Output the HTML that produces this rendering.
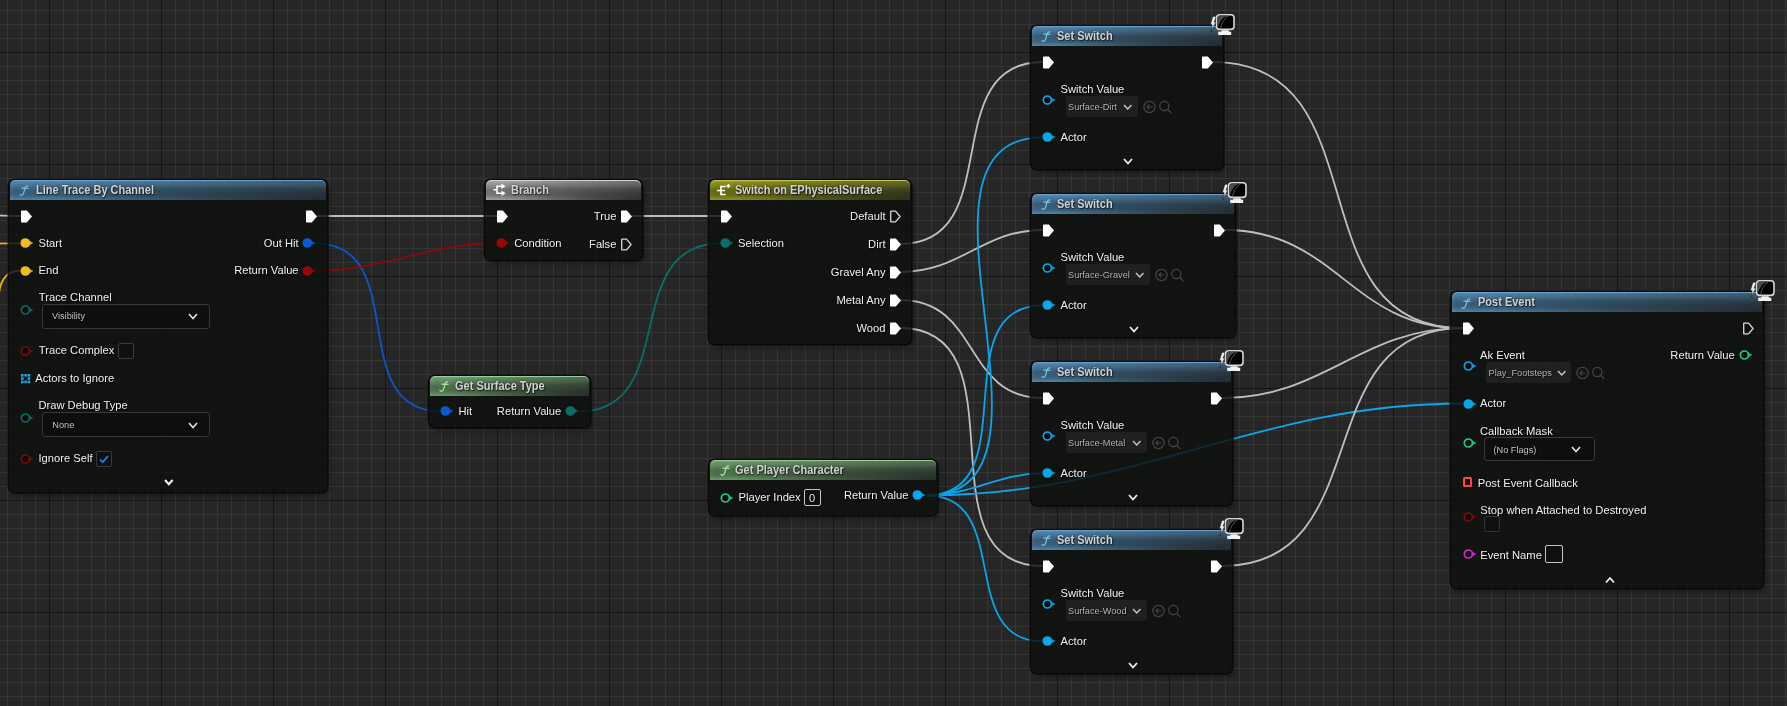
<!DOCTYPE html><html><head><meta charset="utf-8"><style>html,body{margin:0;padding:0}body{width:1787px;height:706px;overflow:hidden;background:#262626;position:relative;font-family:"Liberation Sans",sans-serif}.abs{position:absolute;overflow:visible}.t{position:absolute;white-space:nowrap;line-height:1}.n{position:absolute;background:rgba(14,16,14,0.82);border-radius:6px;box-shadow:0 0 0 1.5px rgba(8,8,8,0.9),2px 3px 5px rgba(0,0,0,0.45)}.hd{position:absolute;border-radius:5px 5px 0 0;background-image:linear-gradient(to bottom,rgba(255,255,255,.08) 0px,rgba(255,255,255,0) 2px),linear-gradient(to right,rgba(40,40,40,0) 0%,rgba(40,40,40,0) 12%,rgba(40,40,40,.18) 45%,rgba(40,40,40,.45) 100%),linear-gradient(to bottom,rgba(0,0,0,0) 1px,rgba(0,0,0,.1) 4px,rgba(0,0,0,.32) 10px,rgba(0,0,0,.3) 15px,rgba(0,0,0,.1) 19px,rgba(0,0,0,.04) 20px),linear-gradient(to right,rgba(255,255,255,.08) 0px,rgba(255,255,255,0) 5px)}.fi{font-family:"Liberation Serif",serif;font-style:italic;font-size:15px}.dd{position:absolute;background:#0e0e0e;border:1px solid #383838;border-radius:3px}.dd2{position:absolute;background:rgba(44,44,44,0.55);border-radius:3px}.cb{position:absolute;background:#101010;border:1px solid #3a3a3a;border-radius:2px}.hd2{position:absolute;border-radius:0 5px 0 0;background:linear-gradient(to bottom,rgba(22,24,26,0) 25%,rgba(22,24,26,.72) 100%);-webkit-mask-image:linear-gradient(to right,transparent 12%,#000 100%);mask-image:linear-gradient(to right,transparent 12%,#000 100%)}#root{position:absolute;left:0;top:0;width:1787px;height:706px;will-change:transform}</style></head><body><div id="root">
<svg class="abs" width="1787" height="706" style="left:0;top:0"><rect x="7" y="0" width="1" height="706" fill="#353535"/><rect x="21" y="0" width="1" height="706" fill="#353535"/><rect x="35" y="0" width="1" height="706" fill="#353535"/><rect x="63" y="0" width="1" height="706" fill="#353535"/><rect x="77" y="0" width="1" height="706" fill="#353535"/><rect x="91" y="0" width="1" height="706" fill="#353535"/><rect x="105" y="0" width="1" height="706" fill="#353535"/><rect x="119" y="0" width="1" height="706" fill="#353535"/><rect x="133" y="0" width="1" height="706" fill="#353535"/><rect x="147" y="0" width="1" height="706" fill="#353535"/><rect x="175" y="0" width="1" height="706" fill="#353535"/><rect x="189" y="0" width="1" height="706" fill="#353535"/><rect x="203" y="0" width="1" height="706" fill="#353535"/><rect x="217" y="0" width="1" height="706" fill="#353535"/><rect x="231" y="0" width="1" height="706" fill="#353535"/><rect x="245" y="0" width="1" height="706" fill="#353535"/><rect x="259" y="0" width="1" height="706" fill="#353535"/><rect x="287" y="0" width="1" height="706" fill="#353535"/><rect x="301" y="0" width="1" height="706" fill="#353535"/><rect x="315" y="0" width="1" height="706" fill="#353535"/><rect x="329" y="0" width="1" height="706" fill="#353535"/><rect x="343" y="0" width="1" height="706" fill="#353535"/><rect x="357" y="0" width="1" height="706" fill="#353535"/><rect x="371" y="0" width="1" height="706" fill="#353535"/><rect x="399" y="0" width="1" height="706" fill="#353535"/><rect x="413" y="0" width="1" height="706" fill="#353535"/><rect x="427" y="0" width="1" height="706" fill="#353535"/><rect x="441" y="0" width="1" height="706" fill="#353535"/><rect x="455" y="0" width="1" height="706" fill="#353535"/><rect x="469" y="0" width="1" height="706" fill="#353535"/><rect x="483" y="0" width="1" height="706" fill="#353535"/><rect x="511" y="0" width="1" height="706" fill="#353535"/><rect x="525" y="0" width="1" height="706" fill="#353535"/><rect x="539" y="0" width="1" height="706" fill="#353535"/><rect x="553" y="0" width="1" height="706" fill="#353535"/><rect x="567" y="0" width="1" height="706" fill="#353535"/><rect x="581" y="0" width="1" height="706" fill="#353535"/><rect x="595" y="0" width="1" height="706" fill="#353535"/><rect x="623" y="0" width="1" height="706" fill="#353535"/><rect x="637" y="0" width="1" height="706" fill="#353535"/><rect x="651" y="0" width="1" height="706" fill="#353535"/><rect x="665" y="0" width="1" height="706" fill="#353535"/><rect x="679" y="0" width="1" height="706" fill="#353535"/><rect x="693" y="0" width="1" height="706" fill="#353535"/><rect x="707" y="0" width="1" height="706" fill="#353535"/><rect x="735" y="0" width="1" height="706" fill="#353535"/><rect x="749" y="0" width="1" height="706" fill="#353535"/><rect x="763" y="0" width="1" height="706" fill="#353535"/><rect x="777" y="0" width="1" height="706" fill="#353535"/><rect x="791" y="0" width="1" height="706" fill="#353535"/><rect x="805" y="0" width="1" height="706" fill="#353535"/><rect x="819" y="0" width="1" height="706" fill="#353535"/><rect x="847" y="0" width="1" height="706" fill="#353535"/><rect x="861" y="0" width="1" height="706" fill="#353535"/><rect x="875" y="0" width="1" height="706" fill="#353535"/><rect x="889" y="0" width="1" height="706" fill="#353535"/><rect x="903" y="0" width="1" height="706" fill="#353535"/><rect x="917" y="0" width="1" height="706" fill="#353535"/><rect x="931" y="0" width="1" height="706" fill="#353535"/><rect x="959" y="0" width="1" height="706" fill="#353535"/><rect x="973" y="0" width="1" height="706" fill="#353535"/><rect x="987" y="0" width="1" height="706" fill="#353535"/><rect x="1001" y="0" width="1" height="706" fill="#353535"/><rect x="1015" y="0" width="1" height="706" fill="#353535"/><rect x="1029" y="0" width="1" height="706" fill="#353535"/><rect x="1043" y="0" width="1" height="706" fill="#353535"/><rect x="1071" y="0" width="1" height="706" fill="#353535"/><rect x="1085" y="0" width="1" height="706" fill="#353535"/><rect x="1099" y="0" width="1" height="706" fill="#353535"/><rect x="1113" y="0" width="1" height="706" fill="#353535"/><rect x="1127" y="0" width="1" height="706" fill="#353535"/><rect x="1141" y="0" width="1" height="706" fill="#353535"/><rect x="1155" y="0" width="1" height="706" fill="#353535"/><rect x="1183" y="0" width="1" height="706" fill="#353535"/><rect x="1197" y="0" width="1" height="706" fill="#353535"/><rect x="1211" y="0" width="1" height="706" fill="#353535"/><rect x="1225" y="0" width="1" height="706" fill="#353535"/><rect x="1239" y="0" width="1" height="706" fill="#353535"/><rect x="1253" y="0" width="1" height="706" fill="#353535"/><rect x="1267" y="0" width="1" height="706" fill="#353535"/><rect x="1295" y="0" width="1" height="706" fill="#353535"/><rect x="1309" y="0" width="1" height="706" fill="#353535"/><rect x="1323" y="0" width="1" height="706" fill="#353535"/><rect x="1337" y="0" width="1" height="706" fill="#353535"/><rect x="1351" y="0" width="1" height="706" fill="#353535"/><rect x="1365" y="0" width="1" height="706" fill="#353535"/><rect x="1379" y="0" width="1" height="706" fill="#353535"/><rect x="1407" y="0" width="1" height="706" fill="#353535"/><rect x="1421" y="0" width="1" height="706" fill="#353535"/><rect x="1435" y="0" width="1" height="706" fill="#353535"/><rect x="1449" y="0" width="1" height="706" fill="#353535"/><rect x="1463" y="0" width="1" height="706" fill="#353535"/><rect x="1477" y="0" width="1" height="706" fill="#353535"/><rect x="1491" y="0" width="1" height="706" fill="#353535"/><rect x="1519" y="0" width="1" height="706" fill="#353535"/><rect x="1533" y="0" width="1" height="706" fill="#353535"/><rect x="1547" y="0" width="1" height="706" fill="#353535"/><rect x="1561" y="0" width="1" height="706" fill="#353535"/><rect x="1575" y="0" width="1" height="706" fill="#353535"/><rect x="1589" y="0" width="1" height="706" fill="#353535"/><rect x="1603" y="0" width="1" height="706" fill="#353535"/><rect x="1631" y="0" width="1" height="706" fill="#353535"/><rect x="1645" y="0" width="1" height="706" fill="#353535"/><rect x="1659" y="0" width="1" height="706" fill="#353535"/><rect x="1673" y="0" width="1" height="706" fill="#353535"/><rect x="1687" y="0" width="1" height="706" fill="#353535"/><rect x="1701" y="0" width="1" height="706" fill="#353535"/><rect x="1715" y="0" width="1" height="706" fill="#353535"/><rect x="1743" y="0" width="1" height="706" fill="#353535"/><rect x="1757" y="0" width="1" height="706" fill="#353535"/><rect x="1771" y="0" width="1" height="706" fill="#353535"/><rect x="1785" y="0" width="1" height="706" fill="#353535"/><rect x="0" y="10" width="1787" height="1" fill="#353535"/><rect x="0" y="24" width="1787" height="1" fill="#353535"/><rect x="0" y="38" width="1787" height="1" fill="#353535"/><rect x="0" y="66" width="1787" height="1" fill="#353535"/><rect x="0" y="80" width="1787" height="1" fill="#353535"/><rect x="0" y="94" width="1787" height="1" fill="#353535"/><rect x="0" y="108" width="1787" height="1" fill="#353535"/><rect x="0" y="122" width="1787" height="1" fill="#353535"/><rect x="0" y="136" width="1787" height="1" fill="#353535"/><rect x="0" y="150" width="1787" height="1" fill="#353535"/><rect x="0" y="178" width="1787" height="1" fill="#353535"/><rect x="0" y="192" width="1787" height="1" fill="#353535"/><rect x="0" y="206" width="1787" height="1" fill="#353535"/><rect x="0" y="220" width="1787" height="1" fill="#353535"/><rect x="0" y="234" width="1787" height="1" fill="#353535"/><rect x="0" y="248" width="1787" height="1" fill="#353535"/><rect x="0" y="262" width="1787" height="1" fill="#353535"/><rect x="0" y="290" width="1787" height="1" fill="#353535"/><rect x="0" y="304" width="1787" height="1" fill="#353535"/><rect x="0" y="318" width="1787" height="1" fill="#353535"/><rect x="0" y="332" width="1787" height="1" fill="#353535"/><rect x="0" y="346" width="1787" height="1" fill="#353535"/><rect x="0" y="360" width="1787" height="1" fill="#353535"/><rect x="0" y="374" width="1787" height="1" fill="#353535"/><rect x="0" y="402" width="1787" height="1" fill="#353535"/><rect x="0" y="416" width="1787" height="1" fill="#353535"/><rect x="0" y="430" width="1787" height="1" fill="#353535"/><rect x="0" y="444" width="1787" height="1" fill="#353535"/><rect x="0" y="458" width="1787" height="1" fill="#353535"/><rect x="0" y="472" width="1787" height="1" fill="#353535"/><rect x="0" y="486" width="1787" height="1" fill="#353535"/><rect x="0" y="514" width="1787" height="1" fill="#353535"/><rect x="0" y="528" width="1787" height="1" fill="#353535"/><rect x="0" y="542" width="1787" height="1" fill="#353535"/><rect x="0" y="556" width="1787" height="1" fill="#353535"/><rect x="0" y="570" width="1787" height="1" fill="#353535"/><rect x="0" y="584" width="1787" height="1" fill="#353535"/><rect x="0" y="598" width="1787" height="1" fill="#353535"/><rect x="0" y="626" width="1787" height="1" fill="#353535"/><rect x="0" y="640" width="1787" height="1" fill="#353535"/><rect x="0" y="654" width="1787" height="1" fill="#353535"/><rect x="0" y="668" width="1787" height="1" fill="#353535"/><rect x="0" y="682" width="1787" height="1" fill="#353535"/><rect x="0" y="696" width="1787" height="1" fill="#353535"/><rect x="49" y="0" width="1" height="706" fill="#151515"/><rect x="161" y="0" width="1" height="706" fill="#151515"/><rect x="273" y="0" width="1" height="706" fill="#151515"/><rect x="385" y="0" width="1" height="706" fill="#151515"/><rect x="497" y="0" width="1" height="706" fill="#151515"/><rect x="609" y="0" width="1" height="706" fill="#151515"/><rect x="721" y="0" width="1" height="706" fill="#151515"/><rect x="833" y="0" width="1" height="706" fill="#151515"/><rect x="945" y="0" width="1" height="706" fill="#151515"/><rect x="1057" y="0" width="1" height="706" fill="#151515"/><rect x="1169" y="0" width="1" height="706" fill="#151515"/><rect x="1281" y="0" width="1" height="706" fill="#151515"/><rect x="1393" y="0" width="1" height="706" fill="#151515"/><rect x="1505" y="0" width="1" height="706" fill="#151515"/><rect x="1617" y="0" width="1" height="706" fill="#151515"/><rect x="1729" y="0" width="1" height="706" fill="#151515"/><rect x="0" y="52" width="1787" height="1" fill="#151515"/><rect x="0" y="164" width="1787" height="1" fill="#151515"/><rect x="0" y="276" width="1787" height="1" fill="#151515"/><rect x="0" y="388" width="1787" height="1" fill="#151515"/><rect x="0" y="500" width="1787" height="1" fill="#151515"/><rect x="0" y="612" width="1787" height="1" fill="#151515"/></svg>
<svg class="abs" width="1787" height="706" style="left:0;top:0"><path d="M-40 214.8C-10 214.8 0 216 22 216" stroke="#bebebe" stroke-width="1.8" fill="none"/><path d="M-40 243.6L22 243.4" stroke="#e8b41c" stroke-width="1.8" fill="none"/><path d="M-25.0 365.0C21.8 365.0 -25.8 270.6 21.0 270.6" stroke="#e8b41c" stroke-width="1.8" fill="none"/><path d="M316.0 216.0C376.3 216.0 436.7 216.0 497.0 216.0" stroke="#bebebe" stroke-width="1.8" fill="none"/><path d="M315.0 243.4C413.0 243.4 343.0 411.4 441.0 411.4" stroke="#0a58c8" stroke-width="1.8" fill="none"/><path d="M315.0 270.6C384.7 270.6 427.3 243.4 497.0 243.4" stroke="#8c0a0a" stroke-width="1.8" fill="none"/><path d="M632.0 216.0C661.7 216.0 691.3 216.0 721.0 216.0" stroke="#bebebe" stroke-width="1.8" fill="none"/><path d="M578.5 411.4C682.0 411.4 617.5 243.4 721.0 243.4" stroke="#0b6e66" stroke-width="1.8" fill="none"/><path d="M900.2 244.0C1008.5 244.0 934.7 62.0 1043.0 62.0" stroke="#bebebe" stroke-width="1.8" fill="none"/><path d="M900.2 272.0C961.8 272.0 981.4 230.0 1043.0 230.0" stroke="#bebebe" stroke-width="1.8" fill="none"/><path d="M900.2 300.0C980.5 300.0 962.7 398.0 1043.0 398.0" stroke="#bebebe" stroke-width="1.8" fill="none"/><path d="M900.2 328.0C1027.1 328.0 916.1 566.0 1043.0 566.0" stroke="#bebebe" stroke-width="1.8" fill="none"/><path d="M926.5 495.4C1084.7 495.4 884.8 137.4 1043.0 137.4" stroke="#0aa6ea" stroke-width="1.8" fill="none"/><path d="M926.5 495.4C1028.7 495.4 940.8 305.4 1043.0 305.4" stroke="#0aa6ea" stroke-width="1.8" fill="none"/><path d="M926.5 495.4C972.7 495.4 996.8 473.4 1043.0 473.4" stroke="#0aa6ea" stroke-width="1.8" fill="none"/><path d="M926.5 495.4C1014.0 495.4 955.5 641.4 1043.0 641.4" stroke="#0aa6ea" stroke-width="1.8" fill="none"/><path d="M926.5 495.4C1136.0 495.4 1253.5 403.5 1463.0 403.5" stroke="#0aa6ea" stroke-width="1.8" fill="none"/><path d="M1212.6 62.0C1384.8 62.0 1290.8 328.2 1463.0 328.2" stroke="#bebebe" stroke-width="1.8" fill="none"/><path d="M1224.6 230.0C1336.8 230.0 1350.8 328.2 1463.0 328.2" stroke="#bebebe" stroke-width="1.8" fill="none"/><path d="M1221.6 398.0C1325.3 398.0 1359.3 328.2 1463.0 328.2" stroke="#bebebe" stroke-width="1.8" fill="none"/><path d="M1221.6 566.0C1381.3 566.0 1303.3 328.2 1463.0 328.2" stroke="#bebebe" stroke-width="1.8" fill="none"/></svg>
<div class="n" style="left:9px;top:180px;width:318.4px;height:312px"></div>
<div class="hd" style="left:10px;top:180px;width:316.4px;height:20px;background-color:#5288ae;box-shadow:inset 0 1px 0 #64a2cc"></div>
<div class="hd2" style="left:10px;top:180px;width:316.4px;height:20px"></div>
<svg class="abs" width="12" height="13" style="left:19px;top:183.6px"><path d="M0.9 10.4 Q2.4 12.3 4.1 10.2 Q4.8 8.8 6.1 3.8 Q6.7 1.7 8.9 1.8" stroke="#78bde8" stroke-width="1.3" fill="none" stroke-linecap="round"/><path d="M2.9 4.2 L9.1 4.4" stroke="#78bde8" stroke-width="1.2" stroke-linecap="round"/></svg>
<div class="t" style="top:183.92px;font-size:12.5px;color:#d0d0d0;font-weight:bold;left:35.60px;transform:scaleX(0.88);transform-origin:0 0;text-shadow:0 0 3px rgba(10,16,20,.55),1px 1px 1px rgba(0,0,0,.55);">Line Trace By Channel</div>
<svg class="abs" width="13" height="15" style="left:19.90px;top:208.50px"><path d="M1.8 1.5 H6.8 L12 7.5 L6.8 13.5 H1.8 Q1 13.5 1 12.7 V2.3 Q1 1.5 1.8 1.5Z" fill="#ffffff"/></svg>
<svg class="abs" width="13" height="15" style="left:304.90px;top:208.50px"><path d="M1.8 1.5 H6.8 L12 7.5 L6.8 13.5 H1.8 Q1 13.5 1 12.7 V2.3 Q1 1.5 1.8 1.5Z" fill="#ffffff"/></svg>
<svg class="abs" width="16" height="14" style="left:20.30px;top:236.40px"><circle cx="5.35" cy="7" r="4.85" fill="#f0bc1e"/><path d="M9.1 4.5 L13.399999999999999 7 L9.1 9.5Z" fill="#f0bc1e" opacity="0.85"/></svg>
<div class="t" style="top:237.72px;font-size:11.2px;color:#f0f0f0;left:38.50px;text-shadow:1px 1px 1px rgba(0,0,0,.7),0 0 2px rgba(0,0,0,.35);">Start</div>
<svg class="abs" width="16" height="14" style="left:20.30px;top:263.60px"><circle cx="5.35" cy="7" r="4.85" fill="#f0bc1e"/><path d="M9.1 4.5 L13.399999999999999 7 L9.1 9.5Z" fill="#f0bc1e" opacity="0.85"/></svg>
<div class="t" style="top:264.72px;font-size:11.2px;color:#f0f0f0;left:38.50px;text-shadow:1px 1px 1px rgba(0,0,0,.7),0 0 2px rgba(0,0,0,.35);">End</div>
<svg class="abs" width="16" height="14" style="left:302.40px;top:236.40px"><circle cx="5.35" cy="7" r="4.85" fill="#0a5ad0"/><path d="M9.1 4.5 L13.399999999999999 7 L9.1 9.5Z" fill="#0a5ad0" opacity="0.85"/></svg>
<div class="t" style="top:237.72px;font-size:11.2px;color:#f0f0f0;right:1488.40px;text-shadow:1px 1px 1px rgba(0,0,0,.7),0 0 2px rgba(0,0,0,.35);">Out Hit</div>
<svg class="abs" width="16" height="14" style="left:302.40px;top:263.60px"><circle cx="5.35" cy="7" r="4.85" fill="#960808"/><path d="M9.1 4.5 L13.399999999999999 7 L9.1 9.5Z" fill="#960808" opacity="0.85"/></svg>
<div class="t" style="top:264.72px;font-size:11.2px;color:#f0f0f0;right:1488.40px;text-shadow:1px 1px 1px rgba(0,0,0,.7),0 0 2px rgba(0,0,0,.35);">Return Value</div>
<div class="t" style="top:291.82px;font-size:11.2px;color:#f0f0f0;left:38.80px;text-shadow:1px 1px 1px rgba(0,0,0,.7),0 0 2px rgba(0,0,0,.35);">Trace Channel</div>
<svg class="abs" width="16" height="14" style="left:20.30px;top:302.90px"><circle cx="5.35" cy="7" r="3.9999999999999996" fill="#090909" stroke="#0b6e66" stroke-width="1.7"/><path d="M9.1 4.5 L13.399999999999999 7 L9.1 9.5Z" fill="#0b6e66" opacity="0.85"/></svg>
<div class="dd" style="left:42px;top:304px;width:166px;height:23px"></div>
<div class="t" style="top:312.41px;font-size:9.2px;color:#c4c4c4;left:52.00px;text-shadow:1px 1px 1px rgba(0,0,0,.7),0 0 2px rgba(0,0,0,.35);">Visibility</div>
<svg class="abs" width="10" height="6.5" style="left:187.5px;top:313px"><path d="M1 1 L5.0 5.5 L9 1" stroke="#e0e0e0" stroke-width="1.6" fill="none"/></svg>
<svg class="abs" width="16" height="14" style="left:20.30px;top:343.60px"><circle cx="5.35" cy="7" r="3.9999999999999996" fill="#090909" stroke="#7c0a0a" stroke-width="1.7"/><path d="M9.1 4.5 L13.399999999999999 7 L9.1 9.5Z" fill="#7c0a0a" opacity="0.85"/></svg>
<div class="t" style="top:344.82px;font-size:11.2px;color:#f0f0f0;left:38.80px;text-shadow:1px 1px 1px rgba(0,0,0,.7),0 0 2px rgba(0,0,0,.35);">Trace Complex</div>
<div class="cb" style="left:118px;top:342.5px;width:14px;height:14px;border-color:#3a3a3a"></div>
<svg class="abs" width="10" height="10" style="left:21px;top:374px"><rect x="0.0" y="0.0" width="2.6" height="2.6" fill="#1aa3e8"/><rect x="0.0" y="3.3" width="2.6" height="2.6" fill="#1aa3e8"/><rect x="0.0" y="6.6" width="2.6" height="2.6" fill="#1aa3e8"/><rect x="3.3" y="0.0" width="2.6" height="2.6" fill="#1aa3e8"/><rect x="3.3" y="6.6" width="2.6" height="2.6" fill="#1aa3e8"/><rect x="6.6" y="0.0" width="2.6" height="2.6" fill="#1aa3e8"/><rect x="6.6" y="3.3" width="2.6" height="2.6" fill="#1aa3e8"/><rect x="6.6" y="6.6" width="2.6" height="2.6" fill="#1aa3e8"/></svg>
<div class="t" style="top:372.92px;font-size:11.2px;color:#f0f0f0;left:35.20px;text-shadow:1px 1px 1px rgba(0,0,0,.7),0 0 2px rgba(0,0,0,.35);">Actors to Ignore</div>
<div class="t" style="top:399.92px;font-size:11.2px;color:#f0f0f0;left:38.40px;text-shadow:1px 1px 1px rgba(0,0,0,.7),0 0 2px rgba(0,0,0,.35);">Draw Debug Type</div>
<svg class="abs" width="16" height="14" style="left:20.30px;top:410.80px"><circle cx="5.35" cy="7" r="3.9999999999999996" fill="#090909" stroke="#0b6e66" stroke-width="1.7"/><path d="M9.1 4.5 L13.399999999999999 7 L9.1 9.5Z" fill="#0b6e66" opacity="0.85"/></svg>
<div class="dd" style="left:42px;top:412px;width:166px;height:23px"></div>
<div class="t" style="top:420.51px;font-size:9.2px;color:#c4c4c4;left:52.30px;text-shadow:1px 1px 1px rgba(0,0,0,.7),0 0 2px rgba(0,0,0,.35);">None</div>
<svg class="abs" width="10" height="6.5" style="left:187.5px;top:421.5px"><path d="M1 1 L5.0 5.5 L9 1" stroke="#e0e0e0" stroke-width="1.6" fill="none"/></svg>
<svg class="abs" width="16" height="14" style="left:20.30px;top:451.50px"><circle cx="5.35" cy="7" r="3.9999999999999996" fill="#090909" stroke="#7c0a0a" stroke-width="1.7"/><path d="M9.1 4.5 L13.399999999999999 7 L9.1 9.5Z" fill="#7c0a0a" opacity="0.85"/></svg>
<div class="t" style="top:452.82px;font-size:11.2px;color:#f0f0f0;left:38.40px;text-shadow:1px 1px 1px rgba(0,0,0,.7),0 0 2px rgba(0,0,0,.35);">Ignore Self</div>
<div class="cb" style="left:96px;top:451px;width:14px;height:14px;border-color:#3a3a3a"></div>
<svg class="abs" width="16" height="16" style="left:96px;top:451px"><path d="M4 8.5 L6.8 11.2 L12 5" stroke="#1a7fe6" stroke-width="1.8" fill="none"/></svg>
<svg class="abs" width="9.6" height="6.2" style="left:164.2px;top:479.4px"><path d="M1 1 L4.8 5.2 L8.6 1" stroke="#f4f4f4" stroke-width="2.0" fill="none"/></svg>
<div class="n" style="left:485px;top:180px;width:157.20000000000005px;height:80px"></div>
<div class="hd" style="left:486px;top:180px;width:155.20000000000005px;height:20px;background-color:#a6a6a6;box-shadow:inset 0 1px 0 #d0d0d0"></div>
<div class="hd2" style="left:486px;top:180px;width:155.20000000000005px;height:20px"></div>
<svg class="abs" width="14" height="14" style="left:493px;top:183px"><path d="M0.5 6.8 H4 M4 2.5 V11 M3.3 3.2 H9 M3.3 10.3 H9" stroke="#fff" stroke-width="1.6" fill="none"/><path d="M8.5 0.5 L12.5 3.2 L8.5 5.9Z M8.5 7.6 L12.5 10.3 L8.5 13Z" fill="#fff"/></svg>
<div class="t" style="top:184.02px;font-size:12.5px;color:#d0d0d0;font-weight:bold;left:511.40px;transform:scaleX(0.88);transform-origin:0 0;text-shadow:0 0 3px rgba(10,16,20,.55),1px 1px 1px rgba(0,0,0,.55);">Branch</div>
<svg class="abs" width="13" height="15" style="left:495.90px;top:208.50px"><path d="M1.8 1.5 H6.8 L12 7.5 L6.8 13.5 H1.8 Q1 13.5 1 12.7 V2.3 Q1 1.5 1.8 1.5Z" fill="#ffffff"/></svg>
<svg class="abs" width="13" height="15" style="left:619.90px;top:208.50px"><path d="M1.8 1.5 H6.8 L12 7.5 L6.8 13.5 H1.8 Q1 13.5 1 12.7 V2.3 Q1 1.5 1.8 1.5Z" fill="#ffffff"/></svg>
<div class="t" style="top:210.92px;font-size:11.2px;color:#f0f0f0;right:1170.60px;text-shadow:1px 1px 1px rgba(0,0,0,.7),0 0 2px rgba(0,0,0,.35);">True</div>
<svg class="abs" width="16" height="14" style="left:496.40px;top:236.40px"><circle cx="5.35" cy="7" r="4.85" fill="#960808"/><path d="M9.1 4.5 L13.399999999999999 7 L9.1 9.5Z" fill="#960808" opacity="0.85"/></svg>
<div class="t" style="top:237.92px;font-size:11.2px;color:#f0f0f0;left:514.20px;text-shadow:1px 1px 1px rgba(0,0,0,.7),0 0 2px rgba(0,0,0,.35);">Condition</div>
<svg class="abs" width="13" height="15" style="left:619.90px;top:236.50px"><path d="M2.1 2.1 H6.5 L11.1 7.5 L6.5 12.9 H2.1 Q1.7 12.9 1.7 12.5 V2.5 Q1.7 2.1 2.1 2.1Z" fill="none" stroke="#d8d8d8" stroke-width="1.3" stroke-linejoin="round"/></svg>
<div class="t" style="top:238.92px;font-size:11.2px;color:#f0f0f0;right:1170.60px;text-shadow:1px 1px 1px rgba(0,0,0,.7),0 0 2px rgba(0,0,0,.35);">False</div>
<div class="n" style="left:709px;top:180px;width:202.20000000000005px;height:164px"></div>
<div class="hd" style="left:710px;top:180px;width:200.20000000000005px;height:20px;background-color:#969a1e;box-shadow:inset 0 1px 0 #c4c850"></div>
<div class="hd2" style="left:710px;top:180px;width:200.20000000000005px;height:20px"></div>
<svg class="abs" width="16" height="14" style="left:716px;top:183px"><path d="M5 2.7 V12.3 M4.2 3.5 H9.6 M1 7.5 H9 M4.2 11.5 H9.6" stroke="#fff" stroke-width="1.7" fill="none"/><path d="M12.3 1 V5 M10.3 3 H14.3" stroke="#fff" stroke-width="1.3" fill="none"/></svg>
<div class="t" style="top:184.12px;font-size:12.5px;color:#d0d0d0;font-weight:bold;left:735.20px;transform:scaleX(0.88);transform-origin:0 0;text-shadow:0 0 3px rgba(10,16,20,.55),1px 1px 1px rgba(0,0,0,.55);">Switch on EPhysicalSurface</div>
<svg class="abs" width="13" height="15" style="left:719.90px;top:208.50px"><path d="M1.8 1.5 H6.8 L12 7.5 L6.8 13.5 H1.8 Q1 13.5 1 12.7 V2.3 Q1 1.5 1.8 1.5Z" fill="#ffffff"/></svg>
<svg class="abs" width="16" height="14" style="left:720.30px;top:236.40px"><circle cx="5.35" cy="7" r="4.85" fill="#0b6e66"/><path d="M9.1 4.5 L13.399999999999999 7 L9.1 9.5Z" fill="#0b6e66" opacity="0.85"/></svg>
<div class="t" style="top:237.92px;font-size:11.2px;color:#f0f0f0;left:738.00px;text-shadow:1px 1px 1px rgba(0,0,0,.7),0 0 2px rgba(0,0,0,.35);">Selection</div>
<svg class="abs" width="13" height="15" style="left:889.00px;top:208.50px"><path d="M2.1 2.1 H6.5 L11.1 7.5 L6.5 12.9 H2.1 Q1.7 12.9 1.7 12.5 V2.5 Q1.7 2.1 2.1 2.1Z" fill="none" stroke="#d8d8d8" stroke-width="1.3" stroke-linejoin="round"/></svg>
<div class="t" style="top:210.82px;font-size:11.2px;color:#f0f0f0;right:901.50px;text-shadow:1px 1px 1px rgba(0,0,0,.7),0 0 2px rgba(0,0,0,.35);">Default</div>
<svg class="abs" width="13" height="15" style="left:889.00px;top:236.50px"><path d="M1.8 1.5 H6.8 L12 7.5 L6.8 13.5 H1.8 Q1 13.5 1 12.7 V2.3 Q1 1.5 1.8 1.5Z" fill="#ffffff"/></svg>
<div class="t" style="top:238.92px;font-size:11.2px;color:#f0f0f0;right:901.50px;text-shadow:1px 1px 1px rgba(0,0,0,.7),0 0 2px rgba(0,0,0,.35);">Dirt</div>
<svg class="abs" width="13" height="15" style="left:889.00px;top:264.50px"><path d="M1.8 1.5 H6.8 L12 7.5 L6.8 13.5 H1.8 Q1 13.5 1 12.7 V2.3 Q1 1.5 1.8 1.5Z" fill="#ffffff"/></svg>
<div class="t" style="top:266.92px;font-size:11.2px;color:#f0f0f0;right:901.50px;text-shadow:1px 1px 1px rgba(0,0,0,.7),0 0 2px rgba(0,0,0,.35);">Gravel Any</div>
<svg class="abs" width="13" height="15" style="left:889.00px;top:292.50px"><path d="M1.8 1.5 H6.8 L12 7.5 L6.8 13.5 H1.8 Q1 13.5 1 12.7 V2.3 Q1 1.5 1.8 1.5Z" fill="#ffffff"/></svg>
<div class="t" style="top:294.92px;font-size:11.2px;color:#f0f0f0;right:901.50px;text-shadow:1px 1px 1px rgba(0,0,0,.7),0 0 2px rgba(0,0,0,.35);">Metal Any</div>
<svg class="abs" width="13" height="15" style="left:889.00px;top:320.50px"><path d="M1.8 1.5 H6.8 L12 7.5 L6.8 13.5 H1.8 Q1 13.5 1 12.7 V2.3 Q1 1.5 1.8 1.5Z" fill="#ffffff"/></svg>
<div class="t" style="top:322.92px;font-size:11.2px;color:#f0f0f0;right:901.50px;text-shadow:1px 1px 1px rgba(0,0,0,.7),0 0 2px rgba(0,0,0,.35);">Wood</div>
<div class="n" style="left:429px;top:376px;width:161.20000000000005px;height:51px"></div>
<div class="hd" style="left:430px;top:376px;width:159.20000000000005px;height:20px;background-color:#6fa06f;box-shadow:inset 0 1px 0 #9ccc9c"></div>
<div class="hd2" style="left:430px;top:376px;width:159.20000000000005px;height:20px"></div>
<svg class="abs" width="12" height="13" style="left:439px;top:379.6px"><path d="M0.9 10.4 Q2.4 12.3 4.1 10.2 Q4.8 8.8 6.1 3.8 Q6.7 1.7 8.9 1.8" stroke="#a8e8a0" stroke-width="1.3" fill="none" stroke-linecap="round"/><path d="M2.9 4.2 L9.1 4.4" stroke="#a8e8a0" stroke-width="1.2" stroke-linecap="round"/></svg>
<div class="t" style="top:380.12px;font-size:12.5px;color:#d0d0d0;font-weight:bold;left:455.40px;transform:scaleX(0.88);transform-origin:0 0;text-shadow:0 0 3px rgba(10,16,20,.55),1px 1px 1px rgba(0,0,0,.55);">Get Surface Type</div>
<svg class="abs" width="16" height="14" style="left:440.30px;top:404.40px"><circle cx="5.35" cy="7" r="4.85" fill="#0a5ad0"/><path d="M9.1 4.5 L13.399999999999999 7 L9.1 9.5Z" fill="#0a5ad0" opacity="0.85"/></svg>
<div class="t" style="top:405.62px;font-size:11.2px;color:#f0f0f0;left:458.50px;text-shadow:1px 1px 1px rgba(0,0,0,.7),0 0 2px rgba(0,0,0,.35);">Hit</div>
<svg class="abs" width="16" height="14" style="left:565.40px;top:404.40px"><circle cx="5.35" cy="7" r="4.85" fill="#0b6e66"/><path d="M9.1 4.5 L13.399999999999999 7 L9.1 9.5Z" fill="#0b6e66" opacity="0.85"/></svg>
<div class="t" style="top:405.62px;font-size:11.2px;color:#f0f0f0;right:1225.70px;text-shadow:1px 1px 1px rgba(0,0,0,.7),0 0 2px rgba(0,0,0,.35);">Return Value</div>
<div class="n" style="left:709px;top:460px;width:228.10000000000002px;height:55px"></div>
<div class="hd" style="left:710px;top:460px;width:226.10000000000002px;height:20px;background-color:#6fa06f;box-shadow:inset 0 1px 0 #9ccc9c"></div>
<div class="hd2" style="left:710px;top:460px;width:226.10000000000002px;height:20px"></div>
<svg class="abs" width="12" height="13" style="left:719.5px;top:463.6px"><path d="M0.9 10.4 Q2.4 12.3 4.1 10.2 Q4.8 8.8 6.1 3.8 Q6.7 1.7 8.9 1.8" stroke="#a8e8a0" stroke-width="1.3" fill="none" stroke-linecap="round"/><path d="M2.9 4.2 L9.1 4.4" stroke="#a8e8a0" stroke-width="1.2" stroke-linecap="round"/></svg>
<div class="t" style="top:463.82px;font-size:12.5px;color:#d0d0d0;font-weight:bold;left:735.30px;transform:scaleX(0.88);transform-origin:0 0;text-shadow:0 0 3px rgba(10,16,20,.55),1px 1px 1px rgba(0,0,0,.55);">Get Player Character</div>
<svg class="abs" width="16" height="14" style="left:720.40px;top:490.90px"><circle cx="5.35" cy="7" r="3.9999999999999996" fill="#090909" stroke="#1ec89a" stroke-width="1.7"/><path d="M9.1 4.5 L13.399999999999999 7 L9.1 9.5Z" fill="#1ec89a" opacity="0.85"/></svg>
<div class="t" style="top:491.62px;font-size:11.2px;color:#f0f0f0;left:738.50px;text-shadow:1px 1px 1px rgba(0,0,0,.7),0 0 2px rgba(0,0,0,.35);">Player Index</div>
<div class="cb" style="left:804px;top:489px;width:15px;height:15px;border-color:#c4c4c4"></div>
<div class="t" style="top:492.52px;font-size:11.2px;color:#e0e0e0;left:809.00px;text-shadow:1px 1px 1px rgba(0,0,0,.7),0 0 2px rgba(0,0,0,.35);">0</div>
<svg class="abs" width="16" height="14" style="left:912.40px;top:488.40px"><circle cx="5.35" cy="7" r="4.85" fill="#0aa6ea"/><path d="M9.1 4.5 L13.399999999999999 7 L9.1 9.5Z" fill="#0aa6ea" opacity="0.85"/></svg>
<div class="t" style="top:489.72px;font-size:11.2px;color:#f0f0f0;right:878.60px;text-shadow:1px 1px 1px rgba(0,0,0,.7),0 0 2px rgba(0,0,0,.35);">Return Value</div>
<div class="n" style="left:1031px;top:26px;width:192.19999999999982px;height:143px"></div>
<div class="hd" style="left:1032px;top:26px;width:190.19999999999982px;height:20px;background-color:#5288ae;box-shadow:inset 0 1px 0 #64a2cc"></div>
<div class="hd2" style="left:1032px;top:26px;width:190.19999999999982px;height:20px"></div>
<svg class="abs" width="12" height="13" style="left:1041px;top:29.6px"><path d="M0.9 10.4 Q2.4 12.3 4.1 10.2 Q4.8 8.8 6.1 3.8 Q6.7 1.7 8.9 1.8" stroke="#78bde8" stroke-width="1.3" fill="none" stroke-linecap="round"/><path d="M2.9 4.2 L9.1 4.4" stroke="#78bde8" stroke-width="1.2" stroke-linecap="round"/></svg>
<div class="t" style="top:30.02px;font-size:12.5px;color:#d0d0d0;font-weight:bold;left:1057.30px;transform:scaleX(0.88);transform-origin:0 0;text-shadow:0 0 3px rgba(10,16,20,.55),1px 1px 1px rgba(0,0,0,.55);">Set Switch</div>
<svg class="abs" width="13" height="15" style="left:1041.90px;top:54.50px"><path d="M1.8 1.5 H6.8 L12 7.5 L6.8 13.5 H1.8 Q1 13.5 1 12.7 V2.3 Q1 1.5 1.8 1.5Z" fill="#ffffff"/></svg>
<svg class="abs" width="13" height="15" style="left:1201.00px;top:54.50px"><path d="M1.8 1.5 H6.8 L12 7.5 L6.8 13.5 H1.8 Q1 13.5 1 12.7 V2.3 Q1 1.5 1.8 1.5Z" fill="#ffffff"/></svg>
<div class="t" style="top:83.82px;font-size:11.2px;color:#f0f0f0;left:1060.50px;text-shadow:1px 1px 1px rgba(0,0,0,.7),0 0 2px rgba(0,0,0,.35);">Switch Value</div>
<svg class="abs" width="16" height="14" style="left:1042.30px;top:92.90px"><circle cx="5.35" cy="7" r="3.9999999999999996" fill="#090909" stroke="#0aa6ea" stroke-width="1.7"/><path d="M9.1 4.5 L13.399999999999999 7 L9.1 9.5Z" fill="#0aa6ea" opacity="0.85"/></svg>
<div class="dd2" style="left:1066px;top:96px;width:72px;height:20.5px"></div>
<div class="t" style="top:102.81px;font-size:9.2px;color:#b4b4b4;left:1068.00px;text-shadow:1px 1px 1px rgba(0,0,0,.7),0 0 2px rgba(0,0,0,.35);">Surface-Dirt</div>
<svg class="abs" width="9.5" height="6" style="left:1123px;top:104px"><path d="M1 1 L4.75 5 L8.5 1" stroke="#c8c8c8" stroke-width="1.4" fill="none"/></svg>
<svg class="abs" width="32" height="16" style="left:1142.7px;top:98.5px"><circle cx="6.5" cy="8" r="5.6" stroke="#454545" stroke-width="1.2" fill="none"/><path d="M9.5 8 H4.2 M6.4 5.6 L4 8 L6.4 10.4" stroke="#454545" stroke-width="1.2" fill="none"/><circle cx="21.3" cy="7" r="4.6" stroke="#454545" stroke-width="1.2" fill="none"/><path d="M24.6 10.3 L28.3 14" stroke="#454545" stroke-width="1.3" fill="none"/></svg>
<svg class="abs" width="16" height="14" style="left:1042.30px;top:130.40px"><circle cx="5.35" cy="7" r="4.85" fill="#0aa6ea"/><path d="M9.1 4.5 L13.399999999999999 7 L9.1 9.5Z" fill="#0aa6ea" opacity="0.85"/></svg>
<div class="t" style="top:132.02px;font-size:11.2px;color:#f0f0f0;left:1060.50px;text-shadow:1px 1px 1px rgba(0,0,0,.7),0 0 2px rgba(0,0,0,.35);">Actor</div>
<svg class="abs" width="10" height="6.5" style="left:1123.3px;top:157.8px"><path d="M1 1 L5.0 5.5 L9 1" stroke="#f0f0f0" stroke-width="1.8" fill="none"/></svg>
<svg class="abs" width="27" height="23" style="left:1209.60px;top:14.00px"><defs><linearGradient id="bg14" x1="0" y1="0" x2="0" y2="1"><stop offset="0" stop-color="#ffffff"/><stop offset="0.55" stop-color="#e0e0e0"/><stop offset="1" stop-color="#3a3a3a"/></linearGradient></defs><path d="M3.0 2.4 L5.9 2.4 L4.1 8.2 L5.8 8.2 L0.9 18.2 L2.1 10.6 L0.4 10.6Z" fill="url(#bg14)" stroke="#111" stroke-width="0.4"/><rect x="6.6" y="0.8" width="17.4" height="14.6" rx="3.2" fill="#000" stroke="#d8d8d8" stroke-width="1.6"/><path d="M7.6 14.6 Q9.5 5 17.5 1.6 L10.2 1.6 Q7.6 1.6 7.6 4.2Z" fill="#4a4a4a"/><path d="M10.4 14.6 Q12 6 18.5 1.8" stroke="#777" stroke-width="0.7" fill="none"/><path d="M12.2 16.2 H18.2 L19.5 17.8 H21.2 V21 H8.2 V17.8 H10.9Z" fill="#f2f2f2"/></svg>
<div class="n" style="left:1031px;top:194px;width:204.29999999999995px;height:143px"></div>
<div class="hd" style="left:1032px;top:194px;width:202.29999999999995px;height:20px;background-color:#5288ae;box-shadow:inset 0 1px 0 #64a2cc"></div>
<div class="hd2" style="left:1032px;top:194px;width:202.29999999999995px;height:20px"></div>
<svg class="abs" width="12" height="13" style="left:1041px;top:197.6px"><path d="M0.9 10.4 Q2.4 12.3 4.1 10.2 Q4.8 8.8 6.1 3.8 Q6.7 1.7 8.9 1.8" stroke="#78bde8" stroke-width="1.3" fill="none" stroke-linecap="round"/><path d="M2.9 4.2 L9.1 4.4" stroke="#78bde8" stroke-width="1.2" stroke-linecap="round"/></svg>
<div class="t" style="top:198.02px;font-size:12.5px;color:#d0d0d0;font-weight:bold;left:1057.30px;transform:scaleX(0.88);transform-origin:0 0;text-shadow:0 0 3px rgba(10,16,20,.55),1px 1px 1px rgba(0,0,0,.55);">Set Switch</div>
<svg class="abs" width="13" height="15" style="left:1041.90px;top:222.50px"><path d="M1.8 1.5 H6.8 L12 7.5 L6.8 13.5 H1.8 Q1 13.5 1 12.7 V2.3 Q1 1.5 1.8 1.5Z" fill="#ffffff"/></svg>
<svg class="abs" width="13" height="15" style="left:1213.10px;top:222.50px"><path d="M1.8 1.5 H6.8 L12 7.5 L6.8 13.5 H1.8 Q1 13.5 1 12.7 V2.3 Q1 1.5 1.8 1.5Z" fill="#ffffff"/></svg>
<div class="t" style="top:251.82px;font-size:11.2px;color:#f0f0f0;left:1060.50px;text-shadow:1px 1px 1px rgba(0,0,0,.7),0 0 2px rgba(0,0,0,.35);">Switch Value</div>
<svg class="abs" width="16" height="14" style="left:1042.30px;top:260.90px"><circle cx="5.35" cy="7" r="3.9999999999999996" fill="#090909" stroke="#0aa6ea" stroke-width="1.7"/><path d="M9.1 4.5 L13.399999999999999 7 L9.1 9.5Z" fill="#0aa6ea" opacity="0.85"/></svg>
<div class="dd2" style="left:1066px;top:264px;width:84px;height:20.5px"></div>
<div class="t" style="top:270.81px;font-size:9.2px;color:#b4b4b4;left:1068.00px;text-shadow:1px 1px 1px rgba(0,0,0,.7),0 0 2px rgba(0,0,0,.35);">Surface-Gravel</div>
<svg class="abs" width="9.5" height="6" style="left:1135px;top:272px"><path d="M1 1 L4.75 5 L8.5 1" stroke="#c8c8c8" stroke-width="1.4" fill="none"/></svg>
<svg class="abs" width="32" height="16" style="left:1154.7px;top:266.5px"><circle cx="6.5" cy="8" r="5.6" stroke="#454545" stroke-width="1.2" fill="none"/><path d="M9.5 8 H4.2 M6.4 5.6 L4 8 L6.4 10.4" stroke="#454545" stroke-width="1.2" fill="none"/><circle cx="21.3" cy="7" r="4.6" stroke="#454545" stroke-width="1.2" fill="none"/><path d="M24.6 10.3 L28.3 14" stroke="#454545" stroke-width="1.3" fill="none"/></svg>
<svg class="abs" width="16" height="14" style="left:1042.30px;top:298.40px"><circle cx="5.35" cy="7" r="4.85" fill="#0aa6ea"/><path d="M9.1 4.5 L13.399999999999999 7 L9.1 9.5Z" fill="#0aa6ea" opacity="0.85"/></svg>
<div class="t" style="top:300.02px;font-size:11.2px;color:#f0f0f0;left:1060.50px;text-shadow:1px 1px 1px rgba(0,0,0,.7),0 0 2px rgba(0,0,0,.35);">Actor</div>
<svg class="abs" width="10" height="6.5" style="left:1129.35px;top:325.8px"><path d="M1 1 L5.0 5.5 L9 1" stroke="#f0f0f0" stroke-width="1.8" fill="none"/></svg>
<svg class="abs" width="27" height="23" style="left:1221.70px;top:182.00px"><defs><linearGradient id="bg182" x1="0" y1="0" x2="0" y2="1"><stop offset="0" stop-color="#ffffff"/><stop offset="0.55" stop-color="#e0e0e0"/><stop offset="1" stop-color="#3a3a3a"/></linearGradient></defs><path d="M3.0 2.4 L5.9 2.4 L4.1 8.2 L5.8 8.2 L0.9 18.2 L2.1 10.6 L0.4 10.6Z" fill="url(#bg182)" stroke="#111" stroke-width="0.4"/><rect x="6.6" y="0.8" width="17.4" height="14.6" rx="3.2" fill="#000" stroke="#d8d8d8" stroke-width="1.6"/><path d="M7.6 14.6 Q9.5 5 17.5 1.6 L10.2 1.6 Q7.6 1.6 7.6 4.2Z" fill="#4a4a4a"/><path d="M10.4 14.6 Q12 6 18.5 1.8" stroke="#777" stroke-width="0.7" fill="none"/><path d="M12.2 16.2 H18.2 L19.5 17.8 H21.2 V21 H8.2 V17.8 H10.9Z" fill="#f2f2f2"/></svg>
<div class="n" style="left:1031px;top:362px;width:201.29999999999995px;height:143px"></div>
<div class="hd" style="left:1032px;top:362px;width:199.29999999999995px;height:20px;background-color:#5288ae;box-shadow:inset 0 1px 0 #64a2cc"></div>
<div class="hd2" style="left:1032px;top:362px;width:199.29999999999995px;height:20px"></div>
<svg class="abs" width="12" height="13" style="left:1041px;top:365.6px"><path d="M0.9 10.4 Q2.4 12.3 4.1 10.2 Q4.8 8.8 6.1 3.8 Q6.7 1.7 8.9 1.8" stroke="#78bde8" stroke-width="1.3" fill="none" stroke-linecap="round"/><path d="M2.9 4.2 L9.1 4.4" stroke="#78bde8" stroke-width="1.2" stroke-linecap="round"/></svg>
<div class="t" style="top:366.02px;font-size:12.5px;color:#d0d0d0;font-weight:bold;left:1057.30px;transform:scaleX(0.88);transform-origin:0 0;text-shadow:0 0 3px rgba(10,16,20,.55),1px 1px 1px rgba(0,0,0,.55);">Set Switch</div>
<svg class="abs" width="13" height="15" style="left:1041.90px;top:390.50px"><path d="M1.8 1.5 H6.8 L12 7.5 L6.8 13.5 H1.8 Q1 13.5 1 12.7 V2.3 Q1 1.5 1.8 1.5Z" fill="#ffffff"/></svg>
<svg class="abs" width="13" height="15" style="left:1210.10px;top:390.50px"><path d="M1.8 1.5 H6.8 L12 7.5 L6.8 13.5 H1.8 Q1 13.5 1 12.7 V2.3 Q1 1.5 1.8 1.5Z" fill="#ffffff"/></svg>
<div class="t" style="top:419.82px;font-size:11.2px;color:#f0f0f0;left:1060.50px;text-shadow:1px 1px 1px rgba(0,0,0,.7),0 0 2px rgba(0,0,0,.35);">Switch Value</div>
<svg class="abs" width="16" height="14" style="left:1042.30px;top:428.90px"><circle cx="5.35" cy="7" r="3.9999999999999996" fill="#090909" stroke="#0aa6ea" stroke-width="1.7"/><path d="M9.1 4.5 L13.399999999999999 7 L9.1 9.5Z" fill="#0aa6ea" opacity="0.85"/></svg>
<div class="dd2" style="left:1066px;top:432px;width:81px;height:20.5px"></div>
<div class="t" style="top:438.81px;font-size:9.2px;color:#b4b4b4;left:1068.00px;text-shadow:1px 1px 1px rgba(0,0,0,.7),0 0 2px rgba(0,0,0,.35);">Surface-Metal</div>
<svg class="abs" width="9.5" height="6" style="left:1132px;top:440px"><path d="M1 1 L4.75 5 L8.5 1" stroke="#c8c8c8" stroke-width="1.4" fill="none"/></svg>
<svg class="abs" width="32" height="16" style="left:1151.7px;top:434.5px"><circle cx="6.5" cy="8" r="5.6" stroke="#454545" stroke-width="1.2" fill="none"/><path d="M9.5 8 H4.2 M6.4 5.6 L4 8 L6.4 10.4" stroke="#454545" stroke-width="1.2" fill="none"/><circle cx="21.3" cy="7" r="4.6" stroke="#454545" stroke-width="1.2" fill="none"/><path d="M24.6 10.3 L28.3 14" stroke="#454545" stroke-width="1.3" fill="none"/></svg>
<svg class="abs" width="16" height="14" style="left:1042.30px;top:466.40px"><circle cx="5.35" cy="7" r="4.85" fill="#0aa6ea"/><path d="M9.1 4.5 L13.399999999999999 7 L9.1 9.5Z" fill="#0aa6ea" opacity="0.85"/></svg>
<div class="t" style="top:468.02px;font-size:11.2px;color:#f0f0f0;left:1060.50px;text-shadow:1px 1px 1px rgba(0,0,0,.7),0 0 2px rgba(0,0,0,.35);">Actor</div>
<svg class="abs" width="10" height="6.5" style="left:1127.85px;top:493.8px"><path d="M1 1 L5.0 5.5 L9 1" stroke="#f0f0f0" stroke-width="1.8" fill="none"/></svg>
<svg class="abs" width="27" height="23" style="left:1218.70px;top:350.00px"><defs><linearGradient id="bg350" x1="0" y1="0" x2="0" y2="1"><stop offset="0" stop-color="#ffffff"/><stop offset="0.55" stop-color="#e0e0e0"/><stop offset="1" stop-color="#3a3a3a"/></linearGradient></defs><path d="M3.0 2.4 L5.9 2.4 L4.1 8.2 L5.8 8.2 L0.9 18.2 L2.1 10.6 L0.4 10.6Z" fill="url(#bg350)" stroke="#111" stroke-width="0.4"/><rect x="6.6" y="0.8" width="17.4" height="14.6" rx="3.2" fill="#000" stroke="#d8d8d8" stroke-width="1.6"/><path d="M7.6 14.6 Q9.5 5 17.5 1.6 L10.2 1.6 Q7.6 1.6 7.6 4.2Z" fill="#4a4a4a"/><path d="M10.4 14.6 Q12 6 18.5 1.8" stroke="#777" stroke-width="0.7" fill="none"/><path d="M12.2 16.2 H18.2 L19.5 17.8 H21.2 V21 H8.2 V17.8 H10.9Z" fill="#f2f2f2"/></svg>
<div class="n" style="left:1031px;top:530px;width:201.29999999999995px;height:143px"></div>
<div class="hd" style="left:1032px;top:530px;width:199.29999999999995px;height:20px;background-color:#5288ae;box-shadow:inset 0 1px 0 #64a2cc"></div>
<div class="hd2" style="left:1032px;top:530px;width:199.29999999999995px;height:20px"></div>
<svg class="abs" width="12" height="13" style="left:1041px;top:533.6px"><path d="M0.9 10.4 Q2.4 12.3 4.1 10.2 Q4.8 8.8 6.1 3.8 Q6.7 1.7 8.9 1.8" stroke="#78bde8" stroke-width="1.3" fill="none" stroke-linecap="round"/><path d="M2.9 4.2 L9.1 4.4" stroke="#78bde8" stroke-width="1.2" stroke-linecap="round"/></svg>
<div class="t" style="top:534.02px;font-size:12.5px;color:#d0d0d0;font-weight:bold;left:1057.30px;transform:scaleX(0.88);transform-origin:0 0;text-shadow:0 0 3px rgba(10,16,20,.55),1px 1px 1px rgba(0,0,0,.55);">Set Switch</div>
<svg class="abs" width="13" height="15" style="left:1041.90px;top:558.50px"><path d="M1.8 1.5 H6.8 L12 7.5 L6.8 13.5 H1.8 Q1 13.5 1 12.7 V2.3 Q1 1.5 1.8 1.5Z" fill="#ffffff"/></svg>
<svg class="abs" width="13" height="15" style="left:1210.10px;top:558.50px"><path d="M1.8 1.5 H6.8 L12 7.5 L6.8 13.5 H1.8 Q1 13.5 1 12.7 V2.3 Q1 1.5 1.8 1.5Z" fill="#ffffff"/></svg>
<div class="t" style="top:587.82px;font-size:11.2px;color:#f0f0f0;left:1060.50px;text-shadow:1px 1px 1px rgba(0,0,0,.7),0 0 2px rgba(0,0,0,.35);">Switch Value</div>
<svg class="abs" width="16" height="14" style="left:1042.30px;top:596.90px"><circle cx="5.35" cy="7" r="3.9999999999999996" fill="#090909" stroke="#0aa6ea" stroke-width="1.7"/><path d="M9.1 4.5 L13.399999999999999 7 L9.1 9.5Z" fill="#0aa6ea" opacity="0.85"/></svg>
<div class="dd2" style="left:1066px;top:600px;width:81px;height:20.5px"></div>
<div class="t" style="top:606.81px;font-size:9.2px;color:#b4b4b4;left:1068.00px;text-shadow:1px 1px 1px rgba(0,0,0,.7),0 0 2px rgba(0,0,0,.35);">Surface-Wood</div>
<svg class="abs" width="9.5" height="6" style="left:1132px;top:608px"><path d="M1 1 L4.75 5 L8.5 1" stroke="#c8c8c8" stroke-width="1.4" fill="none"/></svg>
<svg class="abs" width="32" height="16" style="left:1151.7px;top:602.5px"><circle cx="6.5" cy="8" r="5.6" stroke="#454545" stroke-width="1.2" fill="none"/><path d="M9.5 8 H4.2 M6.4 5.6 L4 8 L6.4 10.4" stroke="#454545" stroke-width="1.2" fill="none"/><circle cx="21.3" cy="7" r="4.6" stroke="#454545" stroke-width="1.2" fill="none"/><path d="M24.6 10.3 L28.3 14" stroke="#454545" stroke-width="1.3" fill="none"/></svg>
<svg class="abs" width="16" height="14" style="left:1042.30px;top:634.40px"><circle cx="5.35" cy="7" r="4.85" fill="#0aa6ea"/><path d="M9.1 4.5 L13.399999999999999 7 L9.1 9.5Z" fill="#0aa6ea" opacity="0.85"/></svg>
<div class="t" style="top:636.02px;font-size:11.2px;color:#f0f0f0;left:1060.50px;text-shadow:1px 1px 1px rgba(0,0,0,.7),0 0 2px rgba(0,0,0,.35);">Actor</div>
<svg class="abs" width="10" height="6.5" style="left:1127.85px;top:661.8px"><path d="M1 1 L5.0 5.5 L9 1" stroke="#f0f0f0" stroke-width="1.8" fill="none"/></svg>
<svg class="abs" width="27" height="23" style="left:1218.70px;top:518.00px"><defs><linearGradient id="bg518" x1="0" y1="0" x2="0" y2="1"><stop offset="0" stop-color="#ffffff"/><stop offset="0.55" stop-color="#e0e0e0"/><stop offset="1" stop-color="#3a3a3a"/></linearGradient></defs><path d="M3.0 2.4 L5.9 2.4 L4.1 8.2 L5.8 8.2 L0.9 18.2 L2.1 10.6 L0.4 10.6Z" fill="url(#bg518)" stroke="#111" stroke-width="0.4"/><rect x="6.6" y="0.8" width="17.4" height="14.6" rx="3.2" fill="#000" stroke="#d8d8d8" stroke-width="1.6"/><path d="M7.6 14.6 Q9.5 5 17.5 1.6 L10.2 1.6 Q7.6 1.6 7.6 4.2Z" fill="#4a4a4a"/><path d="M10.4 14.6 Q12 6 18.5 1.8" stroke="#777" stroke-width="0.7" fill="none"/><path d="M12.2 16.2 H18.2 L19.5 17.8 H21.2 V21 H8.2 V17.8 H10.9Z" fill="#f2f2f2"/></svg>
<div class="n" style="left:1451px;top:292.4px;width:312.0999999999999px;height:295.6px"></div>
<div class="hd" style="left:1452px;top:292.4px;width:310.0999999999999px;height:20px;background-color:#5288ae;box-shadow:inset 0 1px 0 #64a2cc"></div>
<div class="hd2" style="left:1452px;top:292.4px;width:310.0999999999999px;height:20px"></div>
<svg class="abs" width="12" height="13" style="left:1461px;top:296.6px"><path d="M0.9 10.4 Q2.4 12.3 4.1 10.2 Q4.8 8.8 6.1 3.8 Q6.7 1.7 8.9 1.8" stroke="#78bde8" stroke-width="1.3" fill="none" stroke-linecap="round"/><path d="M2.9 4.2 L9.1 4.4" stroke="#78bde8" stroke-width="1.2" stroke-linecap="round"/></svg>
<div class="t" style="top:296.32px;font-size:12.5px;color:#d0d0d0;font-weight:bold;left:1477.50px;transform:scaleX(0.88);transform-origin:0 0;text-shadow:0 0 3px rgba(10,16,20,.55),1px 1px 1px rgba(0,0,0,.55);">Post Event</div>
<svg class="abs" width="13" height="15" style="left:1461.90px;top:320.70px"><path d="M1.8 1.5 H6.8 L12 7.5 L6.8 13.5 H1.8 Q1 13.5 1 12.7 V2.3 Q1 1.5 1.8 1.5Z" fill="#ffffff"/></svg>
<svg class="abs" width="13" height="15" style="left:1742.00px;top:320.50px"><path d="M2.1 2.1 H6.5 L11.1 7.5 L6.5 12.9 H2.1 Q1.7 12.9 1.7 12.5 V2.5 Q1.7 2.1 2.1 2.1Z" fill="none" stroke="#d8d8d8" stroke-width="1.3" stroke-linejoin="round"/></svg>
<div class="t" style="top:349.92px;font-size:11.2px;color:#f0f0f0;left:1480.00px;text-shadow:1px 1px 1px rgba(0,0,0,.7),0 0 2px rgba(0,0,0,.35);">Ak Event</div>
<div class="t" style="top:349.92px;font-size:11.2px;color:#f0f0f0;right:52.20px;text-shadow:1px 1px 1px rgba(0,0,0,.7),0 0 2px rgba(0,0,0,.35);">Return Value</div>
<svg class="abs" width="16" height="14" style="left:1739.40px;top:348.40px"><circle cx="5.35" cy="7" r="3.9999999999999996" fill="#090909" stroke="#1ec89a" stroke-width="1.7"/><path d="M9.1 4.5 L13.399999999999999 7 L9.1 9.5Z" fill="#1ec89a" opacity="0.85"/></svg>
<svg class="abs" width="16" height="14" style="left:1462.50px;top:359.00px"><circle cx="5.35" cy="7" r="3.9999999999999996" fill="#090909" stroke="#0aa6ea" stroke-width="1.7"/><path d="M9.1 4.5 L13.399999999999999 7 L9.1 9.5Z" fill="#0aa6ea" opacity="0.85"/></svg>
<div class="dd2" style="left:1486px;top:362px;width:85px;height:20.5px"></div>
<div class="t" style="top:369.11px;font-size:9.2px;color:#b4b4b4;left:1488.50px;text-shadow:1px 1px 1px rgba(0,0,0,.7),0 0 2px rgba(0,0,0,.35);">Play_Footsteps</div>
<svg class="abs" width="9.5" height="6" style="left:1557px;top:370px"><path d="M1 1 L4.75 5 L8.5 1" stroke="#c8c8c8" stroke-width="1.4" fill="none"/></svg>
<svg class="abs" width="32" height="16" style="left:1575.7px;top:365px"><circle cx="6.5" cy="8" r="5.6" stroke="#454545" stroke-width="1.2" fill="none"/><path d="M9.5 8 H4.2 M6.4 5.6 L4 8 L6.4 10.4" stroke="#454545" stroke-width="1.2" fill="none"/><circle cx="21.3" cy="7" r="4.6" stroke="#454545" stroke-width="1.2" fill="none"/><path d="M24.6 10.3 L28.3 14" stroke="#454545" stroke-width="1.3" fill="none"/></svg>
<svg class="abs" width="16" height="14" style="left:1462.50px;top:396.50px"><circle cx="5.35" cy="7" r="4.85" fill="#0aa6ea"/><path d="M9.1 4.5 L13.399999999999999 7 L9.1 9.5Z" fill="#0aa6ea" opacity="0.85"/></svg>
<div class="t" style="top:397.82px;font-size:11.2px;color:#f0f0f0;left:1480.00px;text-shadow:1px 1px 1px rgba(0,0,0,.7),0 0 2px rgba(0,0,0,.35);">Actor</div>
<div class="t" style="top:425.82px;font-size:11.2px;color:#f0f0f0;left:1480.00px;text-shadow:1px 1px 1px rgba(0,0,0,.7),0 0 2px rgba(0,0,0,.35);">Callback Mask</div>
<svg class="abs" width="16" height="14" style="left:1462.50px;top:436.10px"><circle cx="5.35" cy="7" r="3.9999999999999996" fill="#090909" stroke="#1ec89a" stroke-width="1.7"/><path d="M9.1 4.5 L13.399999999999999 7 L9.1 9.5Z" fill="#1ec89a" opacity="0.85"/></svg>
<div class="dd" style="left:1484px;top:437.3px;width:109px;height:22.0px"></div>
<div class="t" style="top:446.01px;font-size:9.2px;color:#c4c4c4;left:1493.50px;text-shadow:1px 1px 1px rgba(0,0,0,.7),0 0 2px rgba(0,0,0,.35);">(No Flags)</div>
<svg class="abs" width="10" height="6.5" style="left:1571px;top:445.5px"><path d="M1 1 L5.0 5.5 L9 1" stroke="#e0e0e0" stroke-width="1.6" fill="none"/></svg>
<div class="abs" style="left:1463px;top:477.2px;width:5.4px;height:5.4px;border:2px solid #ff4444;border-radius:1.5px;background:#2a0505"></div>
<div class="t" style="top:477.72px;font-size:11.2px;color:#f0f0f0;left:1477.70px;text-shadow:1px 1px 1px rgba(0,0,0,.7),0 0 2px rgba(0,0,0,.35);">Post Event Callback</div>
<div class="t" style="top:504.52px;font-size:11.2px;color:#f0f0f0;left:1480.30px;text-shadow:1px 1px 1px rgba(0,0,0,.7),0 0 2px rgba(0,0,0,.35);">Stop when Attached to Destroyed</div>
<svg class="abs" width="16" height="14" style="left:1462.50px;top:510.00px"><circle cx="5.35" cy="7" r="3.9999999999999996" fill="#090909" stroke="#7c0a0a" stroke-width="1.7"/><path d="M9.1 4.5 L13.399999999999999 7 L9.1 9.5Z" fill="#7c0a0a" opacity="0.85"/></svg>
<div class="cb" style="left:1484px;top:516px;width:14px;height:14px;border-color:#333"></div>
<svg class="abs" width="16" height="14" style="left:1462.50px;top:546.80px"><circle cx="5.35" cy="7" r="3.9999999999999996" fill="#090909" stroke="#e020d8" stroke-width="1.7"/><path d="M9.1 4.5 L13.399999999999999 7 L9.1 9.5Z" fill="#e020d8" opacity="0.85"/></svg>
<div class="t" style="top:549.52px;font-size:11.2px;color:#f0f0f0;left:1480.30px;text-shadow:1px 1px 1px rgba(0,0,0,.7),0 0 2px rgba(0,0,0,.35);">Event Name</div>
<div class="cb" style="left:1545px;top:545px;width:15.5px;height:15.5px;border-color:#c4c4c4"></div>
<svg class="abs" width="10" height="6.5" style="left:1604.5px;top:577px"><path d="M1 5.5 L5.0 1 L9 5.5" stroke="#f0f0f0" stroke-width="1.8" fill="none"/></svg>
<svg class="abs" width="27" height="23" style="left:1750.00px;top:280.00px"><defs><linearGradient id="bg280" x1="0" y1="0" x2="0" y2="1"><stop offset="0" stop-color="#ffffff"/><stop offset="0.55" stop-color="#e0e0e0"/><stop offset="1" stop-color="#3a3a3a"/></linearGradient></defs><path d="M3.0 2.4 L5.9 2.4 L4.1 8.2 L5.8 8.2 L0.9 18.2 L2.1 10.6 L0.4 10.6Z" fill="url(#bg280)" stroke="#111" stroke-width="0.4"/><rect x="6.6" y="0.8" width="17.4" height="14.6" rx="3.2" fill="#000" stroke="#d8d8d8" stroke-width="1.6"/><path d="M7.6 14.6 Q9.5 5 17.5 1.6 L10.2 1.6 Q7.6 1.6 7.6 4.2Z" fill="#4a4a4a"/><path d="M10.4 14.6 Q12 6 18.5 1.8" stroke="#777" stroke-width="0.7" fill="none"/><path d="M12.2 16.2 H18.2 L19.5 17.8 H21.2 V21 H8.2 V17.8 H10.9Z" fill="#f2f2f2"/></svg>
</div></body></html>
